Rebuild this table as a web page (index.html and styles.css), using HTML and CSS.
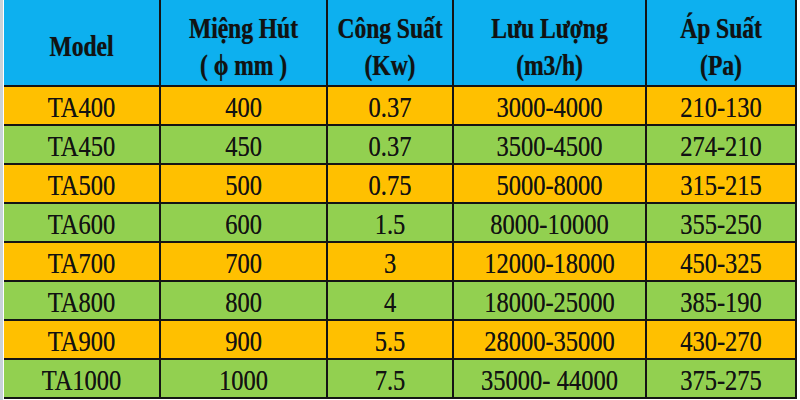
FILE: index.html
```html
<!DOCTYPE html>
<html lang="vi">
<head>
<meta charset="utf-8">
<link rel="stylesheet" href="styles.css">
</head>
<body>
<div class="page">
  <div class="grid">
    <div class="cell head"><span class="t">Model</span></div>
    <div class="cell head"><span class="t">Miệng Hút<br>( ϕ mm )</span></div>
    <div class="cell head"><span class="t">Công Suất<br>(Kw)</span></div>
    <div class="cell head"><span class="t">Lưu Lượng<br>(m3/h)</span></div>
    <div class="cell head"><span class="t">Áp Suất<br>(Pa)</span></div>

    <div class="cell o"><span class="t">TA400</span></div>
    <div class="cell o"><span class="t">400</span></div>
    <div class="cell o"><span class="t">0.37</span></div>
    <div class="cell o"><span class="t">3000-4000</span></div>
    <div class="cell o"><span class="t">210-130</span></div>

    <div class="cell g"><span class="t">TA450</span></div>
    <div class="cell g"><span class="t">450</span></div>
    <div class="cell g"><span class="t">0.37</span></div>
    <div class="cell g"><span class="t">3500-4500</span></div>
    <div class="cell g"><span class="t">274-210</span></div>

    <div class="cell o"><span class="t">TA500</span></div>
    <div class="cell o"><span class="t">500</span></div>
    <div class="cell o"><span class="t">0.75</span></div>
    <div class="cell o"><span class="t">5000-8000</span></div>
    <div class="cell o"><span class="t">315-215</span></div>

    <div class="cell g"><span class="t">TA600</span></div>
    <div class="cell g"><span class="t">600</span></div>
    <div class="cell g"><span class="t">1.5</span></div>
    <div class="cell g"><span class="t">8000-10000</span></div>
    <div class="cell g"><span class="t">355-250</span></div>

    <div class="cell o"><span class="t">TA700</span></div>
    <div class="cell o"><span class="t">700</span></div>
    <div class="cell o"><span class="t">3</span></div>
    <div class="cell o"><span class="t">12000-18000</span></div>
    <div class="cell o"><span class="t">450-325</span></div>

    <div class="cell g"><span class="t">TA800</span></div>
    <div class="cell g"><span class="t">800</span></div>
    <div class="cell g"><span class="t">4</span></div>
    <div class="cell g"><span class="t">18000-25000</span></div>
    <div class="cell g"><span class="t">385-190</span></div>

    <div class="cell o"><span class="t">TA900</span></div>
    <div class="cell o"><span class="t">900</span></div>
    <div class="cell o"><span class="t">5.5</span></div>
    <div class="cell o"><span class="t">28000-35000</span></div>
    <div class="cell o"><span class="t">430-270</span></div>

    <div class="cell g"><span class="t">TA1000</span></div>
    <div class="cell g"><span class="t">1000</span></div>
    <div class="cell g"><span class="t">7.5</span></div>
    <div class="cell g"><span class="t">35000- 44000</span></div>
    <div class="cell g"><span class="t">375-275</span></div>
  </div>
</div>
</body>
</html>
```
FILE: styles.css
```css
html, body {
  margin: 0;
  padding: 0;
  background: #ffffff;
}
.page {
  width: 800px;
  height: 400px;
  overflow: hidden;
  box-sizing: border-box;
  border-left: 3px solid #c9d2d8;
  padding-left: 1px;
}
.grid {
  display: grid;
  grid-template-columns: 155px 165px 124px 191px 148px;
  grid-template-rows: 85px repeat(8, 37px);
  gap: 2px;
  background: #141414;
  width: max-content;
  border-right: 2px solid #141414;
  border-bottom: 2px solid #141414;
  font-family: "Liberation Serif", "Times New Roman", serif;
  color: #121212;
}
.cell {
  display: flex;
  align-items: center;
  justify-content: center;
  text-align: center;
  font-size: 24.5px;
  line-height: 28px;
}
.t {
  display: inline-block;
  transform: scaleY(1.2);
  position: relative;
  top: 1px;
  text-shadow: 0 0 0.6px rgba(0, 0, 0, 0.6);
}
.head {
  background: #0db0ef;
  font-weight: bold;
  font-size: 23.5px;
  line-height: 29px;
  padding-top: 8px;
  box-sizing: border-box;
}
.head .t {
  transform: scaleY(1.25);
  top: 0;
}
.o { background: #ffc000; }
.g { background: #92d050; }
```
